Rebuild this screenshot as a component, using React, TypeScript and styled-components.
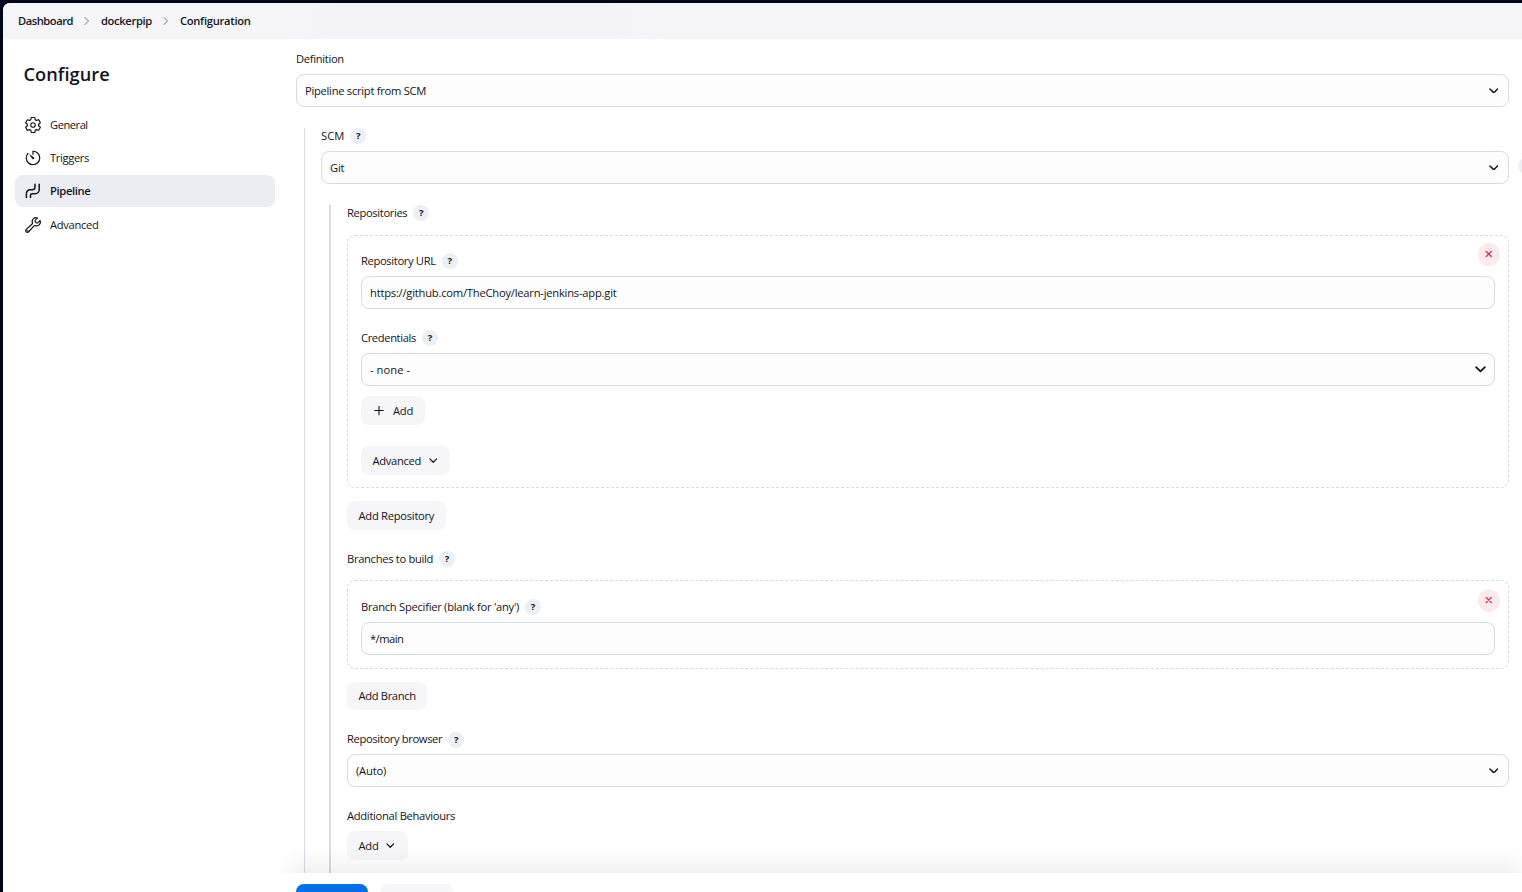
import React from "react";
import styled, { createGlobalStyle } from "styled-components";

const Global = createGlobalStyle`
  * { box-sizing: border-box; }
  html, body { margin: 0; background: #03061a; overflow: hidden; }
  body, button, input { font-family: "Open Sans", "Noto Sans", sans-serif; font-size: 11.2px; color: #14141f; }
`;

const Page = styled.div`
  height: 892px;
  padding: 3px 0 0 3px;
  display: flex;
  background: #03061a;
`;
const Window = styled.div`
  flex: 1;
  min-width: 0;
  display: flex;
  flex-direction: column;
  background: #fff;
  border-top-left-radius: 7px;
  overflow: hidden;
`;
const Breadcrumbs = styled.header`
  flex: none;
  height: 36px;
  padding-left: 15px;
  display: flex;
  align-items: center;
  background: linear-gradient(90deg, #f5f5f8 280px, #f4f3f8 340px, #f4f3f8 600px, #f5f5f8 660px);
`;
const Text = styled.span<{ $track?: number }>`
  letter-spacing: ${(p) => p.$track ?? -0.2}px;
  white-space: nowrap;
  line-height: 16px;
`;
const Crumb = styled(Text)`
  font-weight: 550;
`;
const CrumbArrow = styled.svg`
  width: 6px;
  height: 8px;
  margin: 0 11px;
`;
const Body = styled.div`
  flex: 1;
  min-height: 0;
  display: flex;
`;
const Sidebar = styled.aside`
  flex: none;
  width: 281px;
  padding: 22px 9px 0 12px;
`;
const Title = styled.h1`
  margin: 0 0 21px 8.5px;
  font-size: 18.2px;
  font-weight: 600;
  line-height: 27px;
  letter-spacing: 0.05px;
`;
const Nav = styled.nav`
  display: flex;
  flex-direction: column;
  gap: 1.2px;
`;
const NavItem = styled.a<{ $active?: boolean }>`
  height: 32px;
  padding-left: 9px;
  display: flex;
  align-items: center;
  gap: 8px;
  border-radius: 8px;
  font-weight: ${(p) => (p.$active ? 550 : 400)};
  background: ${(p) => (p.$active ? "#ecedf3" : "transparent")};
  svg { width: 18px; height: 18px; }
`;
const Main = styled.main`
  flex: 1;
  min-width: 0;
  display: flex;
  flex-direction: column;
`;
const Scroll = styled.div`
  flex: none;
  height: 834px;
  padding: 12px 13px 0 12px;
  overflow: hidden;
`;
const Stack = styled.div<{ $gap?: number }>`
  display: flex;
  flex-direction: column;
  align-items: stretch;
  gap: ${(p) => p.$gap ?? 21}px;
`;
const Nested = styled(Stack)<{ $line: number }>`
  margin-left: 8px;
  padding-left: 16px;
  height: 900px;
  border-left: ${(p) => p.$line}px solid #d6dbe8;
`;
const FieldBox = styled.div`
  display: flex;
  flex-direction: column;
  gap: 7px;
`;
const LabelRow = styled.div`
  height: 16px;
  display: flex;
  align-items: center;
  gap: 6px;
`;
const HelpDot = styled.span<{ $drop?: boolean }>`
  width: 16px;
  height: 16px;
  margin-top: ${(p) => (p.$drop ? 2 : 0)}px;
  display: flex;
  align-items: center;
  justify-content: center;
  border-radius: 50%;
  background: #eceff3;
  font-family: "Noto Sans", sans-serif;
  font-size: 9.5px;
  line-height: 15px;
  padding-bottom: 1px;
  font-weight: 700;
`;
const Control = styled.div<{ $inset?: number }>`
  height: 33px;
  padding: 0 ${(p) => p.$inset ?? 10}px 0 8px;
  display: flex;
  align-items: center;
  justify-content: space-between;
  border: 1px solid #d6dbe8;
  border-radius: 8px;
  background: #fdfdfd;
`;
const SelectLine = styled.div`
  position: relative;
`;
const EdgeDot = styled.span`
  position: absolute;
  left: calc(100% + 9px);
  top: 7px;
  width: 16px;
  height: 16px;
  border-radius: 50%;
  background: #eceff3;
`;
const Card = styled.section<{ $top: number; $bottom: number }>`
  position: relative;
  padding: ${(p) => p.$top}px 13px ${(p) => p.$bottom}px;
  border: 1px dashed #d6dbe5;
  border-radius: 8px;
`;
const Remove = styled.button<{ $top: number }>`
  position: absolute;
  top: ${(p) => p.$top}px;
  right: 8px;
  width: 22px;
  height: 23px;
  padding: 0 1px 1px 0;
  display: flex;
  align-items: center;
  justify-content: center;
  border: 0;
  border-radius: 50%;
  background: #fdeaec;
`;
const Button = styled.button<{ $w: number; $gap?: number; $h?: number; $pad?: number }>`
  width: ${(p) => p.$w}px;
  height: ${(p) => p.$h ?? 29}px;
  padding: 0 0 0 ${(p) => p.$pad ?? 11.5}px;
  display: flex;
  align-items: center;
  gap: ${(p) => p.$gap ?? 7.5}px;
  border: 0;
  border-radius: 8px;
  background: #f6f6f9;
`;
const Footer = styled.footer`
  position: relative;
  flex: 1;
  min-height: 0;
  padding: 11px 12px 0;
  display: flex;
  gap: 12px;
  background: #fff;
  &::before {
    content: "";
    position: absolute;
    left: -8px;
    right: 0;
    bottom: 100%;
    height: 25px;
    background: linear-gradient(to top, rgba(0, 0, 0, 0.055), rgba(0, 0, 0, 0.025) 50%, transparent);
    mask-image: linear-gradient(90deg, transparent, #000 30px, #000 calc(100% - 14px), rgba(0, 0, 0, 0.4));
  }
`;
const FooterButton = styled.div<{ $primary?: boolean }>`
  width: ${(p) => (p.$primary ? 72 : 73)}px;
  height: 33px;
  border-radius: 8px;
  background: ${(p) => (p.$primary ? "#0070ea" : "#f6f6f9")};
`;

const Chevron = ({ w = 9.5, s = 1.6 }: { w?: number; s?: number }) => (
  <svg width={w} height={w * 0.6} viewBox="0 0 10 6" fill="none" stroke="#14141f" strokeWidth={s} strokeLinecap="round" strokeLinejoin="round">
    <path d="M1 1l4 4 4-4" />
  </svg>
);
const Separator = () => (
  <CrumbArrow viewBox="0 0 6 8" fill="none" stroke="#a3b0c4" strokeWidth="1.1" strokeLinecap="round" strokeLinejoin="round">
    <path d="M1 .5L4.5 4 1 7.5" />
  </CrumbArrow>
);
const Plus = () => (
  <svg width="10" height="10" viewBox="0 0 10 10" stroke="#14141f" strokeWidth="1.1" strokeLinecap="round">
    <path d="M5 .2v8.6M.7 4.5h8.6" />
  </svg>
);
const Cross = () => (
  <svg width="8" height="8" viewBox="0 0 8 8" stroke="#e6274c" strokeWidth="1.3" strokeLinecap="round">
    <path d="M1.1 1.4l5.2 5.2M6.3 1.4L1.1 6.6" />
  </svg>
);

const iconProps = { viewBox: "0 0 512 512", fill: "none", stroke: "#14141f", strokeWidth: 34, strokeLinecap: "round", strokeLinejoin: "round" } as const;
const Gear = () => (
  <svg {...iconProps}>
    <path d="M262.29 192.31a64 64 0 1057.4 57.4 64.13 64.13 0 00-57.4-57.4zM416.39 256a154.34 154.34 0 01-1.53 20.79l45.21 35.46a10.81 10.81 0 012.45 13.75l-42.77 74a10.81 10.81 0 01-13.14 4.59l-44.9-18.08a16.11 16.11 0 00-15.17 1.75A164.48 164.48 0 01325 400.8a15.94 15.94 0 00-8.82 12.14l-6.73 47.89a11.08 11.08 0 01-10.68 9.17h-85.54a11.11 11.11 0 01-10.69-8.87l-6.72-47.82a16.07 16.07 0 00-9-12.22 155.3 155.3 0 01-21.46-12.57 16 16 0 00-15.11-1.71l-44.89 18.07a10.81 10.81 0 01-13.14-4.58l-42.77-74a10.8 10.8 0 012.45-13.75l38.21-30a16.05 16.05 0 006-14.08c-.36-4.17-.58-8.33-.58-12.5s.21-8.27.58-12.35a16 16 0 00-6.07-13.94l-38.19-30A10.81 10.81 0 0149.48 186l42.77-74a10.81 10.81 0 0113.14-4.59l44.9 18.08a16.11 16.11 0 0015.17-1.75A164.48 164.48 0 01187 111.2a15.94 15.94 0 008.82-12.14l6.73-47.89A11.08 11.08 0 01213.23 42h85.54a11.11 11.11 0 0110.69 8.87l6.72 47.82a16.07 16.07 0 009 12.22 155.3 155.3 0 0121.46 12.57 16 16 0 0015.11 1.71l44.89-18.07a10.81 10.81 0 0113.14 4.58l42.77 74a10.8 10.8 0 01-2.45 13.75l-38.21 30a16.05 16.05 0 00-6.05 14.08c.33 4.14.55 8.3.55 12.47z" />
  </svg>
);
const Timer = () => (
  <svg {...iconProps}>
    <path d="M112.91 128A191.85 191.85 0 0064 254c-1.18 106.35 85.65 193.8 192 194 106.2.2 192-85.83 192-192 0-104.54-83.55-189.61-187.5-192a4.36 4.36 0 00-4.5 4.37V152" />
    <path fill="#14141f" stroke="none" d="M233.38 278.63l-79-113a8.13 8.13 0 0111.32-11.32l113 79a32.5 32.5 0 01-37.25 53.26 33.21 33.21 0 01-8.07-7.94z" />
  </svg>
);
const Pipe = () => (
  <svg viewBox="0 0 18 18" fill="none" stroke="#14141f" strokeWidth="1.5" strokeLinecap="round" strokeLinejoin="round">
    <path d="M2.4 15.4v-4a3.6 3.6 0 0 1 3.6-3.6h2.2a2.8 2.8 0 0 0 2.8-2.8V2.2" />
    <path d="M6.5 15.4v-2.2a1.5 1.5 0 0 1 1.5-1.5h3.2a4 4 0 0 0 4-4V2.2" />
  </svg>
);
const Wrench = () => (
  <svg {...iconProps}>
    <path d="M393.87 190a32.1 32.1 0 01-45.25 0l-26.57-26.57a32.09 32.09 0 010-45.26L382.19 58a1 1 0 00-.3-1.64c-38.82-16.64-89.15-8.16-121.11 23.57-30.58 30.35-32.32 76-21.12 115.84a31.93 31.93 0 01-9.06 32.08L64 380a48.17 48.17 0 1068 68l153.86-167a31.93 31.93 0 0131.6-9.13c39.54 10.59 84.54 8.6 114.72-21.19 32.49-32 39.5-88.56 23.75-120.93a1 1 0 00-1.6-.26z" />
    <circle cx="96" cy="416" r="8" fill="#14141f" />
  </svg>
);

const Label = ({ text, track, help = true, drop }: { text: string; track?: number; help?: boolean; drop?: boolean }) => (
  <LabelRow>
    <Text $track={track}>{text}</Text>
    {help && <HelpDot $drop={drop}>?</HelpDot>}
  </LabelRow>
);
const Select = ({ value, track, inset, size }: { value: string; track?: number; inset?: number; size?: number }) => (
  <Control $inset={inset}>
    <Text $track={track}>{value}</Text>
    <Chevron w={size} />
  </Control>
);

export default function App() {
  return (
    <Page>
      <Global />
      <Window>
        <Breadcrumbs>
          <Crumb $track={-0.48}>Dashboard</Crumb>
          <Separator />
          <Crumb $track={-0.35}>dockerpip</Crumb>
          <Separator />
          <Crumb $track={-0.28}>Configuration</Crumb>
        </Breadcrumbs>
        <Body>
          <Sidebar>
            <Title>Configure</Title>
            <Nav>
              <NavItem><Gear /><Text $track={-0.5}>General</Text></NavItem>
              <NavItem><Timer /><Text $track={-0.36}>Triggers</Text></NavItem>
              <NavItem $active><Pipe /><Text $track={-0.35}>Pipeline</Text></NavItem>
              <NavItem><Wrench /><Text $track={-0.32}>Advanced</Text></NavItem>
            </Nav>
          </Sidebar>
          <Main>
            <Scroll>
              <Stack>
                <FieldBox>
                  <Label text="Definition" track={-0.32} help={false} />
                  <Select value="Pipeline script from SCM" track={-0.28} />
                </FieldBox>
                <Nested $line={1}>
                  <FieldBox>
                    <Label text="SCM" track={0} />
                    <SelectLine>
                      <Select value="Git" />
                      <EdgeDot />
                    </SelectLine>
                  </FieldBox>
                  <Nested $line={2}>
                    <Stack $gap={13}>
                      <Stack $gap={14}>
                        <Label text="Repositories" track={-0.36} />
                        <Card $top={17} $bottom={12}>
                          <Remove $top={7}><Cross /></Remove>
                          <Stack>
                            <FieldBox>
                              <Label text="Repository URL" track={-0.35} />
                              <Control><Text $track={-0.225}>https://github.com/TheChoy/learn-jenkins-app.git</Text></Control>
                            </FieldBox>
                            <Stack $gap={10}>
                              <FieldBox>
                                <Label text="Credentials" track={-0.38} />
                                <Select value="- none -" track={0.05} size={11} inset={8.5} />
                              </FieldBox>
                              <Button $w={64} $gap={9} $pad={13}><Plus /><Text>Add</Text></Button>
                            </Stack>
                            <Button $w={89}><Text $track={-0.32}>Advanced</Text><Chevron w={8.5} s={1.4} /></Button>
                          </Stack>
                        </Card>
                      </Stack>
                      <Button $w={99}><Text $track={-0.27}>Add Repository</Text></Button>
                    </Stack>
                    <Stack $gap={13}>
                      <Label text="Branches to build" track={-0.32} />
                      <Card $top={18} $bottom={13}>
                        <Remove $top={8}><Cross /></Remove>
                        <FieldBox>
                          <Label text="Branch Specifier (blank for 'any')" track={-0.275} />
                          <Control><Text $track={-0.55}>*/main</Text></Control>
                        </FieldBox>
                      </Card>
                      <Button $w={80} $h={28}><Text $track={-0.35}>Add Branch</Text></Button>
                    </Stack>
                    <FieldBox>
                      <Label text="Repository browser" track={-0.36} drop />
                      <Select value="(Auto)" />
                    </FieldBox>
                    <FieldBox>
                      <Label text="Additional Behaviours" track={-0.3} help={false} />
                      <Button $w={61}><Text>Add</Text><Chevron w={8.5} s={1.4} /></Button>
                    </FieldBox>
                  </Nested>
                </Nested>
              </Stack>
            </Scroll>
            <Footer>
              <FooterButton $primary />
              <FooterButton />
            </Footer>
          </Main>
        </Body>
      </Window>
    </Page>
  );
}
